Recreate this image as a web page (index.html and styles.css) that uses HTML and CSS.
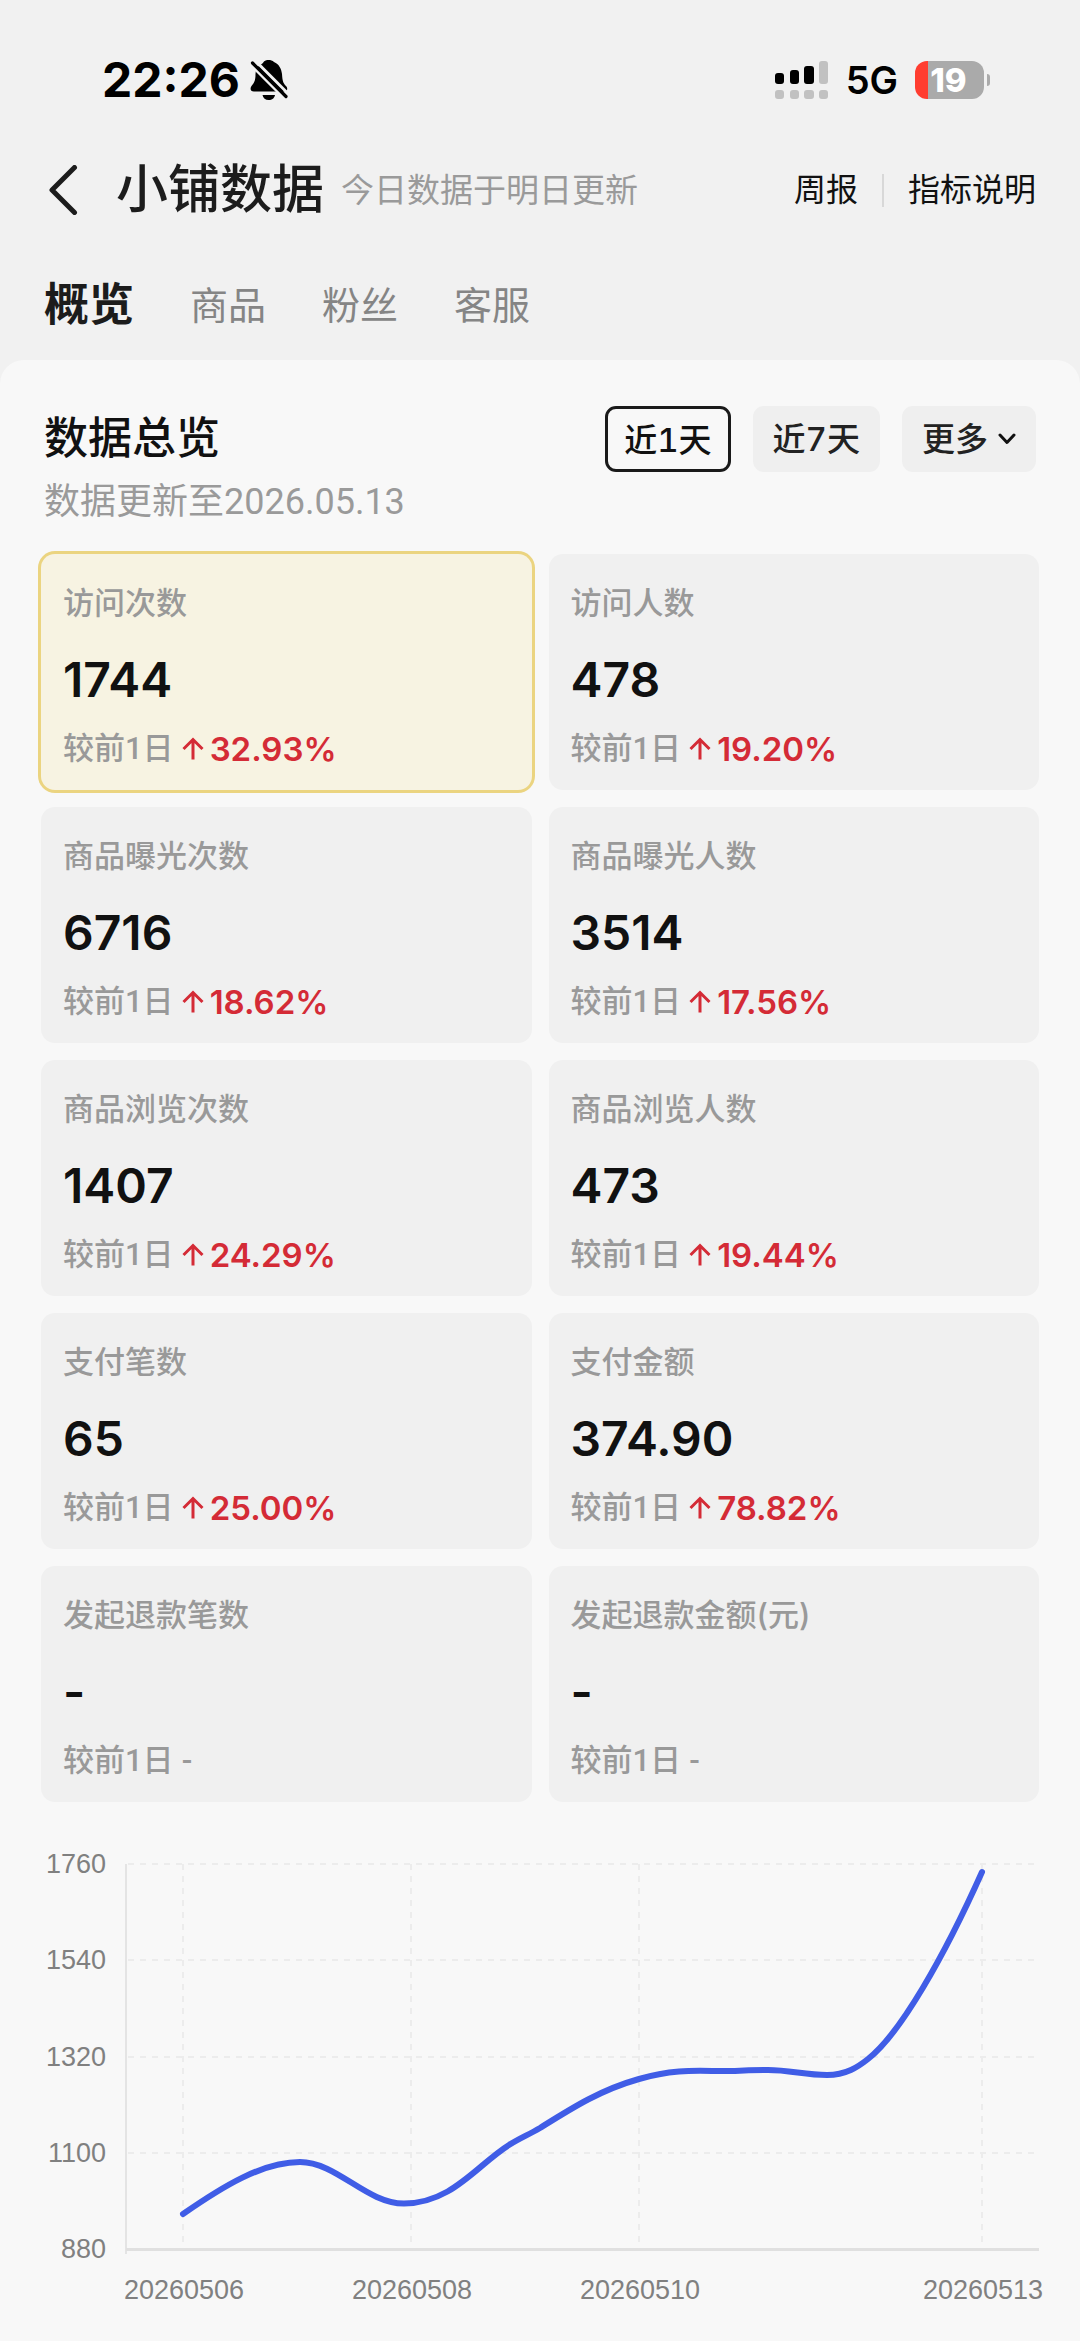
FILE: index.html
```html
<!DOCTYPE html>
<html lang="zh-CN">
<head>
<meta charset="utf-8">
<meta name="viewport" content="width=device-width, initial-scale=1">
<title>小铺数据</title>
<link rel="stylesheet" href="styles.css">
</head>
<body>
<div class="status">
  <div class="status-left">
    <span class="time">22:26</span>
    <svg class="bell" viewBox="0 0 38 40" width="38" height="40" aria-hidden="true">
      <path d="M10 5C12 4 13 3 14 1.500C17 -.500 21 -.500 24 2C29 4 31.500 9 32 14C32.500 21 33 23 36 26C38 28 37.500 31 35 31.500H4C0 31.500 0 28 1.500 26C5 22 5.500 19 5.500 14C5.500 10 7 7 10 5Z" fill="#000"/>
      <path d="M12.500 35H25C24.500 38 22 40 18.700 40S13 38 12.500 35Z" fill="#000"/>
      <path d="M4.500 0L39.500 35" stroke="#f1f1f1" stroke-width="3"/>
      <path d="M0 4L36 40" stroke="#f1f1f1" stroke-width="3"/>
      <path d="M2.500 3L36 36.500" stroke="#000" stroke-width="3.200" stroke-linecap="round"/>
    </svg>
  </div>
  <div class="status-right">
    <svg viewBox="0 0 54 38" width="54" height="38" aria-hidden="true">
      <g fill="#000"><rect y="12" width="9" height="11" rx="3"/><rect x="15" y="9" width="9" height="14" rx="3"/><rect x="29" y="5" width="10" height="18" rx="3"/></g>
      <g fill="#c1c1c1"><rect x="44" y="0" width="9" height="23" rx="3"/><rect y="29" width="9" height="9" rx="3"/><rect x="15" y="29" width="9" height="9" rx="3"/><rect x="29" y="29" width="10" height="9" rx="3"/><rect x="44" y="29" width="9" height="9" rx="3"/></g>
    </svg>
    <span class="network">5G</span>
    <div class="battery"><span class="battery-body">19</span><span class="battery-tip"></span></div>
  </div>
</div>
<header class="titlebar">
  <button class="back" type="button" aria-label="返回">
    <svg viewBox="0 0 30 50" width="30" height="50" aria-hidden="true"><path d="M26.500 2.500L4 25L26.500 47.500" fill="none" stroke="#1c1c1c" stroke-width="5" stroke-linecap="round" stroke-linejoin="round"/></svg>
  </button>
  <h1 class="title">小铺数据</h1>
  <span class="note">今日数据于明日更新</span>
  <nav class="links"><a href="#weekly">周报</a><span class="divider"></span><a href="#metrics">指标说明</a></nav>
</header>
<nav class="tabs">
  <button class="tab tab-active" type="button">概览</button>
  <button class="tab" type="button">商品</button>
  <button class="tab" type="button">粉丝</button>
  <button class="tab" type="button">客服</button>
</nav>
<main class="panel">
  <section class="overview">
    <div>
      <h2 class="heading">数据总览</h2>
      <p class="updated">数据更新至2026.05.13</p>
    </div>
    <div class="ranges">
      <button class="range range-active" type="button">近1天</button>
      <button class="range" type="button">近7天</button>
      <button class="range range-more" type="button">更多<svg viewBox="0 0 18 12" width="18" height="12" aria-hidden="true"><path d="M2 2L9 9.500L16 2" fill="none" stroke="#111" stroke-width="3" stroke-linecap="round" stroke-linejoin="round"/></svg></button>
    </div>
  </section>
  <svg width="0" height="0" class="defs" aria-hidden="true"><symbol id="up" viewBox="0 0 22 24"><path d="M11 22.500V3M1.500 12L11 2.500L20.500 12" fill="none" stroke="currentColor" stroke-width="3"/></symbol></svg>
  <section class="cards">
    <button class="card card-active" type="button"><span class="label">访问次数</span><span class="value">1744</span><span class="delta">较前1日<span class="rise"><svg class="arrow"><use href="#up"/></svg>32.93%</span></span></button>
    <button class="card" type="button"><span class="label">访问人数</span><span class="value">478</span><span class="delta">较前1日<span class="rise"><svg class="arrow"><use href="#up"/></svg>19.20%</span></span></button>
    <button class="card" type="button"><span class="label">商品曝光次数</span><span class="value">6716</span><span class="delta">较前1日<span class="rise"><svg class="arrow"><use href="#up"/></svg>18.62%</span></span></button>
    <button class="card" type="button"><span class="label">商品曝光人数</span><span class="value">3514</span><span class="delta">较前1日<span class="rise"><svg class="arrow"><use href="#up"/></svg>17.56%</span></span></button>
    <button class="card" type="button"><span class="label">商品浏览次数</span><span class="value">1407</span><span class="delta">较前1日<span class="rise"><svg class="arrow"><use href="#up"/></svg>24.29%</span></span></button>
    <button class="card" type="button"><span class="label">商品浏览人数</span><span class="value">473</span><span class="delta">较前1日<span class="rise"><svg class="arrow"><use href="#up"/></svg>19.44%</span></span></button>
    <button class="card" type="button"><span class="label">支付笔数</span><span class="value">65</span><span class="delta">较前1日<span class="rise"><svg class="arrow"><use href="#up"/></svg>25.00%</span></span></button>
    <button class="card" type="button"><span class="label">支付金额</span><span class="value">374.90</span><span class="delta">较前1日<span class="rise"><svg class="arrow"><use href="#up"/></svg>78.82%</span></span></button>
    <button class="card" type="button"><span class="label">发起退款笔数</span><span class="value">-</span><span class="delta">较前1日<span>-</span></span></button>
    <button class="card" type="button"><span class="label">发起退款金额(元)</span><span class="value">-</span><span class="delta">较前1日<span>-</span></span></button>
  </section>
  <svg class="chart" viewBox="0 0 1080 539" role="img" aria-label="访问次数趋势">
    <g class="grid">
      <path d="M128 62H1039M128 158H1039M128 255H1039M128 351H1039"/>
      <path d="M183 62V447M411 62V447M639 62V447M982 62V447"/>
    </g>
    <path d="M126 62V452" stroke="#e4e4e4" stroke-width="2"/>
    <path d="M126 447.500H1039" stroke="#e0e0e0" stroke-width="3"/>
    <path class="line" d="M183 412C222 385 262 360 300 360C337 360 366 401.500 404 401.500C452 401.500 478 362 509 343C520 336 528 333 540 326C572 306 600 288 639 277C680 265 705 270 735 269C750 268 758 268 768 268C790 268 805 273 827 273C846 273 858 265 868 257C900 232 944 155 982 70"/>
    <g class="axis axis-y">
      <text x="106" y="71">1760</text><text x="106" y="167">1540</text><text x="106" y="264">1320</text><text x="106" y="360">1100</text><text x="106" y="456">880</text>
    </g>
    <g class="axis axis-x">
      <text x="184" y="497">20260506</text><text x="412" y="497">20260508</text><text x="640" y="497">20260510</text><text x="983" y="497">20260513</text>
    </g>
  </svg>
</main>
</body>
</html>
```
FILE: styles.css
```css
* { box-sizing: border-box; }
body {
  margin: 0;
  background: #f1f1f1;
  color: #111;
  font-family: Inter, "Noto Sans CJK SC", sans-serif;
}
button {
  border: 0;
  padding: 0;
  margin: 0;
  background: none;
  color: inherit;
  font: inherit;
}
h1, h2, p { margin: 0; }
svg { display: block; flex: none; }

.status {
  display: flex;
  justify-content: space-between;
  align-items: center;
  height: 160px;
  padding: 0 90px 0 102px;
  color: #000;
}
.status-left { display: flex; align-items: center; gap: 10px; }
.status-right { display: flex; align-items: center; gap: 17px; }
.time { font-size: 48px; font-weight: 700; line-height: 56px; }
.network { font-size: 38px; font-weight: 600; line-height: 44px; }
.battery { display: flex; align-items: center; gap: 3px; }
.battery-body {
  width: 69px;
  height: 38px;
  padding-right: 2px;
  border-radius: 12px;
  background: linear-gradient(90deg, #ff3d30 13px, #aaa 13px);
  color: #fff;
  font-size: 33px;
  font-weight: 800;
  line-height: 38px;
  text-align: center;
}
.battery-tip { width: 3px; height: 12px; border-radius: 0 3px 3px 0; background: #aaa; }

.titlebar {
  display: flex;
  align-items: center;
  height: 60px;
  padding: 0 44px 0 48px;
}
.title { margin-left: 38px; font-size: 52px; font-weight: 500; line-height: 60px; color: #1c1c1c; }
.note { margin-left: 17px; font-size: 33px; line-height: 40px; color: #9a9a9a; }
.links { display: flex; align-items: center; gap: 24px; margin-left: auto; font-size: 32px; line-height: 40px; }
.links a { color: #111; text-decoration: none; }
.divider { width: 2px; height: 33px; background: #d8d8d8; }

.tabs { display: flex; align-items: center; gap: 56px; padding: 57px 44px 27px; }
.tab { font-size: 38px; line-height: 56px; color: #858585; }
.tab-active { font-size: 45px; font-weight: 700; color: #1c1c1c; }

.panel { padding-top: 46px; border-radius: 24px 24px 0 0; background: #f8f8f8; }
.overview { display: flex; justify-content: space-between; align-items: flex-start; padding: 0 44px; }
.heading { font-size: 44px; font-weight: 500; line-height: 64px; }
.updated {
  margin-top: 8px;
  font-family: Roboto, "Noto Sans CJK SC", sans-serif;
  font-size: 36px;
  line-height: 48px;
  color: #9a9a9a;
}
.ranges { display: flex; gap: 22px; }
.range {
  height: 66px;
  padding: 0 20px;
  border-radius: 11px;
  background: #efefef;
  color: #222;
  font-size: 33px;
  font-weight: 500;
  font-variant-numeric: tabular-nums;
  line-height: 66px;
}
.range-active { padding: 0 16px; border: 3px solid #1a1a1a; background: #f8f8f8; color: #111; line-height: 62px; }
.range-more { display: flex; align-items: center; gap: 10px; }

.defs { position: absolute; }
.cards { display: grid; grid-template-columns: 1fr 1fr; gap: 17px; margin-top: 28px; padding: 0 41px; }
.card {
  display: flex;
  flex-direction: column;
  align-items: flex-start;
  padding: 29px 22px 21px;
  border-radius: 14px;
  background: #f0f0f0;
}
.card-active { background: #f7f3e2; box-shadow: 0 0 0 3px #ebd480; }
.label { font-size: 31px; font-weight: 500; line-height: 40px; color: #999; }
.value { margin-top: 27px; font-size: 48px; font-weight: 600; line-height: 60px; }
.delta {
  display: flex;
  align-items: center;
  gap: 8px;
  margin-top: 19px;
  font-family: Roboto, "Noto Sans CJK SC", sans-serif;
  font-size: 31px;
  font-weight: 500;
  line-height: 40px;
  color: #999;
}
.rise {
  display: flex;
  align-items: center;
  gap: 6px;
  color: #d42b36;
  font-family: Inter, sans-serif;
  font-size: 33px;
  font-weight: 600;
}
.arrow { width: 22px; height: 24px; }

.chart { width: 100%; height: auto; }
.grid path { fill: none; stroke: #ececec; stroke-width: 2; stroke-dasharray: 6 6; }
.line { fill: none; stroke: #405de6; stroke-width: 6; stroke-linecap: round; }
.axis { fill: #808080; font-family: "Liberation Sans", sans-serif; font-size: 27px; }
.axis-y { text-anchor: end; }
.axis-x { text-anchor: middle; }
```
